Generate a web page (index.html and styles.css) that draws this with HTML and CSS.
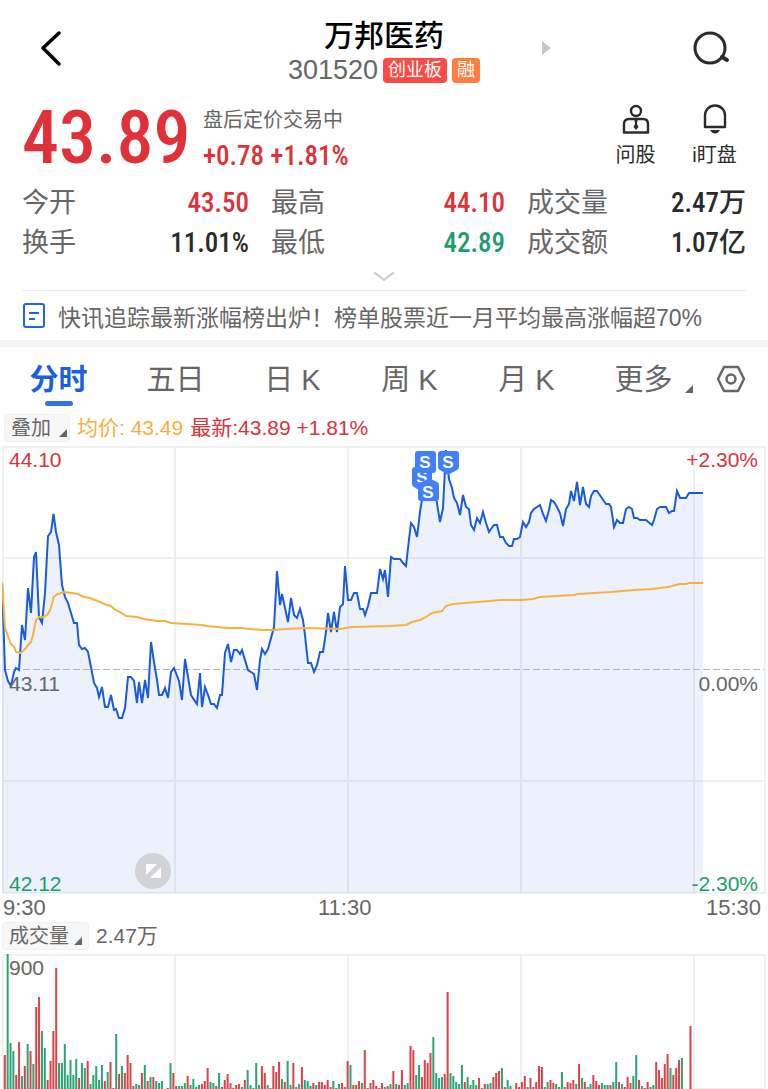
FILE: index.html
```
<!DOCTYPE html>
<html lang="zh-CN">
<head>
    <meta charset="UTF-8">
    <meta name="viewport" content="width=device-width, initial-scale=1.0">
    <title>万邦医药 301520</title>
    <link rel="stylesheet" href="styles.css">
</head>
<body>
    <header class="top-bar">
        <button class="icon-btn back" aria-label="返回">
            <svg width="24" height="38" viewBox="0 0 24 38"><path d="M21 4 5 19 21 35" fill="none" stroke="#000" stroke-width="3.500" stroke-linecap="round" stroke-linejoin="round"/></svg>
        </button>
        <div class="stock">
            <h1>万邦医药</h1>
            <div class="stock-code">
                <span>301520</span>
                <span class="tag tag-red">创业板</span>
                <span class="tag tag-orange">融</span>
            </div>
        </div>
        <button class="icon-btn next" aria-label="下一只">
            <svg width="10" height="16" viewBox="0 0 10 16"><path d="M1 1 10 8 1 15z" fill="#c8c8c8"/></svg>
        </button>
        <button class="icon-btn search" aria-label="搜索">
            <svg width="38" height="34" viewBox="0 0 38 34"><circle cx="18" cy="17" r="15" fill="none" stroke="#2b2b2b" stroke-width="3"/><path d="M30 26 35 29" stroke="#2b2b2b" stroke-width="4" stroke-linecap="round"/></svg>
        </button>
    </header>

    <section class="price-row">
        <div class="price">43.89</div>
        <div class="price-side">
            <div class="status">盘后定价交易中</div>
            <div class="change">+0.78 +1.81%</div>
        </div>
        <button class="tool">
            <svg width="28" height="30" viewBox="0 0 28 30" fill="none" stroke="#2b2b2b" stroke-width="2.400"><circle cx="14" cy="7" r="5"/><path d="M2 28.500V20Q2 15 7 15H21Q26 15 26 20V28.500z" stroke-linejoin="round"/><path d="M12.500 16h3l-.5 4 1.500 3-2.500 3-2.500-3 1.500-3z" fill="#2b2b2b" stroke="none"/></svg>
            <span>问股</span>
        </button>
        <button class="tool">
            <svg width="28" height="30" viewBox="0 0 28 30" fill="none" stroke="#2b2b2b" stroke-width="2.400"><path d="M4 23V11.500a10 10 0 0 1 20 0V23z" stroke-linejoin="round"/><path d="M9 26h10q-2 3.500-5 3.500T9 26z" fill="#2b2b2b" stroke="none"/></svg>
            <span>i盯盘</span>
        </button>
    </section>

    <dl class="quote">
        <div><dt>今开</dt><dd class="up">43.50</dd></div>
        <div><dt>最高</dt><dd class="up">44.10</dd></div>
        <div><dt>成交量</dt><dd>2.47万</dd></div>
        <div><dt>换手</dt><dd>11.01%</dd></div>
        <div><dt>最低</dt><dd class="down">42.89</dd></div>
        <div><dt>成交额</dt><dd>1.07亿</dd></div>
    </dl>
    <button class="expand" aria-label="展开">
        <svg width="22" height="12" viewBox="0 0 22 12"><path d="M2 2 11 9 20 2" fill="none" stroke="#c8c8c8" stroke-width="2" stroke-linecap="round"/></svg>
    </button>

    <a class="news" href="#">
        <svg width="24" height="26" viewBox="0 0 24 26" fill="none" stroke="#2563e0" stroke-width="2"><rect x="2" y="1" width="20" height="23" rx="2"/><path d="M7 10H17M7 16H13"/></svg>
        <span>快讯追踪最新涨幅榜出炉！榜单股票近一月平均最高涨幅超70%</span>
    </a>

    <nav class="tabs">
        <button class="tab active">分时</button>
        <button class="tab">五日</button>
        <button class="tab">日 K</button>
        <button class="tab">周 K</button>
        <button class="tab">月 K</button>
        <button class="tab more">更多</button>
        <button class="settings" aria-label="设置">
            <svg width="30" height="28" viewBox="0 0 30 28" fill="none" stroke="#666" stroke-width="2.500"><path d="M8 2H22L28 14 22 26H8L2 14z" stroke-linejoin="round"/><circle cx="15" cy="14" r="4.500"/></svg>
        </button>
    </nav>

    <div class="legend">
        <button class="pick overlay-pick">叠加</button>
        <span class="avg">均价: 43.49</span>
        <span class="up">最新:43.89 +1.81%</span>
    </div>

    <div class="chart">
        <svg id="priceChart" viewBox="2 446 764 448">
            <g class="grid">
                <path d="M3 447H765M3 558H765M3 781H765M3 893H765M3 446V894M175 446V894M348 446V894M521 446V894M694 446V894M765 446V894"/>
            </g>
            <polygon id="priceArea" class="area"/>
            <path class="base-line" d="M3 669.500H764"/>
            <polyline id="priceLine" class="price-line"/>
            <polyline id="avgLine" class="avg-line"/>
            <g class="marker">
                <path d="M415 467h14q3 0 3 3v14q0 2-2 3l-8 5-8-5q-2-1-2-3v-14q0-3 3-3z"/>
                <text x="422" y="483">S</text>
                <path d="M418 451h15q3 0 3 3v16q0 3-3 3h-15q-3 0-3-3v-16q0-3 3-3z"/>
                <text x="425" y="468">S</text>
                <path d="M422 482l7-4 8 4q2 1 2 3v13q0 3-3 3h-15q-3 0-3-3v-13q0-3 4-3z"/>
                <text x="428" y="498">S</text>
                <path d="M441 451h15q3 0 3 3v13q0 2-2 3l-9 5-8-5q-2-1-2-3v-13q0-3 3-3z"/>
                <text x="448" y="468">S</text>
            </g>
        </svg>
        <span class="label top left up">44.10</span>
        <span class="label top right up">+2.30%</span>
        <span class="label mid left">43.11</span>
        <span class="label mid right">0.00%</span>
        <span class="label bottom left down">42.12</span>
        <span class="label bottom right down">-2.30%</span>
        <button class="fullscreen" aria-label="全屏">
            <svg width="36" height="36" viewBox="0 0 36 36"><circle cx="18" cy="18" r="18" fill="#d2d3d7"/><path d="M11 11H22L11 22zM26 14V25H15z" fill="#fff"/></svg>
        </button>
    </div>
    <div class="times"><span>9:30</span><span>11:30</span><span>15:30</span></div>

    <div class="volume-head">
        <button class="pick volume-pick">成交量</button>
        <span>2.47万</span>
    </div>
    <div class="chart">
        <svg id="volumeChart" viewBox="2 953 764 136">
            <g class="grid">
                <path d="M3 954H765M3 1088H765M3 953V1088M175 953V1088M348 953V1088M521 953V1088M694 953V1088M765 953V1088"/>
            </g>
            <g id="bars"></g>
        </svg>
        <span class="label top left">900</span>
    </div>

    <script src="script.js"></script>
</body>
</html>
```
FILE: styles.css
```
* {
    box-sizing: border-box;
}
body {
    margin: 0;
    background-color: #fff;
    color: #666;
    font-family: "Liberation Sans", "Noto Sans CJK SC", sans-serif;
}
button {
    padding: 0;
    border: none;
    background: none;
    color: inherit;
    font: inherit;
    cursor: pointer;
}
svg {
    display: block;
}
.up {
    color: #d9333b;
}
.down {
    color: #1d9d6b;
}

/* header */
.top-bar {
    position: relative;
    display: grid;
    grid-template-columns: 1fr auto 1fr;
    align-items: center;
    height: 96px;
    padding: 0 38px;
}
.stock {
    padding-top: 8px;
    text-align: center;
}
h1 {
    margin: 0;
    color: #000;
    font-size: 30px;
    font-weight: 500;
    line-height: 36px;
}
.stock-code {
    display: flex;
    align-items: center;
    gap: 5px;
    font-size: 27px;
    line-height: 32px;
}
.tag {
    padding: 0 5px;
    border-radius: 4px;
    color: #fff;
    font-size: 18px;
    line-height: 25px;
}
.tag-red {
    background-color: #fb4b46;
}
.tag-orange {
    background-color: #ff7d40;
}
.next {
    position: absolute;
    left: calc(50% + 157px);
    top: 40px;
}
.search {
    justify-self: end;
}

/* price */
.price-row {
    display: flex;
    align-items: center;
    height: 87px;
    padding: 0 14px 3px 22px;
}
.price {
    width: 181px;
    color: #e03038;
    font-family: "Roboto Condensed", Roboto, sans-serif;
    font-size: 74px;
    font-weight: 500;
    line-height: 80px;
}
.price-side {
    flex: 1;
}
.status {
    font-size: 20px;
    line-height: 36px;
}
.change {
    color: #e03038;
    font-family: "Roboto Condensed", Roboto, sans-serif;
    font-size: 27px;
    font-weight: 500;
    line-height: 36px;
}
.tool {
    display: flex;
    flex-direction: column;
    align-items: center;
    gap: 6px;
    width: 79px;
    padding-bottom: 2px;
    color: #2b2b2b;
    font-size: 20px;
    line-height: 30px;
}

/* quote values */
.quote {
    display: grid;
    grid-template-columns: 227fr 234fr 219fr;
    column-gap: 22px;
    margin: 0;
    padding: 0 22px;
}
.quote div {
    display: flex;
    justify-content: space-between;
    height: 40px;
    line-height: 40px;
}
.quote dt {
    font-size: 27px;
}
.quote dd {
    margin: 0;
    color: #2b2b2b;
    font-family: "Roboto Condensed", Roboto, "Noto Sans CJK SC", sans-serif;
    font-size: 27px;
    font-weight: 500;
}
.quote .up {
    color: #e03038;
}
.quote .down {
    color: #1d9d6b;
}
.expand {
    display: flex;
    justify-content: center;
    align-items: center;
    width: 100%;
    height: 27px;
}
.news {
    display: flex;
    align-items: center;
    gap: 12px;
    height: 50px;
    margin: 0 22px;
    border-top: 1px solid #ebebeb;
    color: #666;
    font-size: 23px;
    text-decoration: none;
    white-space: nowrap;
}

/* tabs */
.tabs {
    display: flex;
    height: 73px;
    border-top: 7px solid #f3f3f3;
}
.tab {
    position: relative;
    flex: 1;
    font-size: 29px;
    line-height: 64px;
}
.active {
    color: #1a5fe0;
    font-weight: bold;
}
.active::after {
    content: "";
    position: absolute;
    left: 50%;
    bottom: 7px;
    width: 28px;
    height: 5px;
    margin-left: -14px;
    border-radius: 3px;
    background-color: #3570e8;
}
.more::after, .pick::after {
    content: "";
    border-left: 8px solid transparent;
    border-bottom: 8px solid #666;
}
.more::after {
    position: absolute;
    right: 9px;
    bottom: 20px;
}
.settings {
    display: flex;
    justify-content: center;
    align-items: center;
    width: 66px;
    padding-right: 9px;
    padding-bottom: 2px;
}

/* charts */
.legend, .volume-head {
    display: flex;
    gap: 7px;
    font-size: 21px;
    line-height: 28px;
}
.legend {
    height: 33px;
    padding: 1px 4px 0;
}
.volume-head {
    height: 32px;
    padding: 0 2px;
}
.pick {
    display: flex;
    justify-content: space-between;
    align-items: center;
    width: 66px;
    height: 28px;
    padding: 0 2px 0 6px;
    border: 1px solid #f0f0f0;
    border-radius: 4px;
    background-color: #f7f7f7;
    font-size: 20px;
}
.volume-pick {
    width: 87px;
    padding-right: 6px;
}
.pick::after {
    margin-top: 10px;
}
.avg {
    color: #f5b041;
}
.chart {
    position: relative;
    padding: 0 2px;
}
.label {
    position: absolute;
    font-size: 21px;
    line-height: 24px;
}
.left {
    left: 9px;
}
.right {
    right: 10px;
}
.top {
    top: 2px;
}
.mid {
    top: 226px;
}
.bottom {
    bottom: -2px;
}
.fullscreen {
    position: absolute;
    left: 135px;
    bottom: 5px;
}
.times {
    display: grid;
    grid-template-columns: 315fr 100fr 343fr;
    padding: 0 7px 0 3px;
    font-size: 22px;
    line-height: 28px;
}
.times span:last-child {
    text-align: right;
}
.grid path {
    fill: none;
    stroke: #f0f0f2;
    stroke-width: 2;
}
.area {
    fill: #2b63dc;
    fill-opacity: 0.09;
}
.base-line {
    fill: none;
    stroke: #b3b5bd;
    stroke-width: 1;
    stroke-dasharray: 7 3;
}
.price-line {
    fill: none;
    stroke: #1c5bd8;
    stroke-width: 2;
}
.avg-line {
    fill: none;
    stroke: #f7b140;
    stroke-width: 2;
}
.marker path {
    fill: #4080fb;
}
.marker text {
    fill: #fff;
    font-size: 17px;
    font-weight: bold;
    text-anchor: middle;
}
.bar-r {
    fill: #d94349;
}
.bar-g {
    fill: #2ba375;
}
```
FILE: script.js
```
const price = `2,582 5,670 8,681 11,686 14,672 16,668 19,670 22,625 25,640 28,588 31,613 34,557 36,552 39,617 42,623
45,593 48,536 51,532 53.5,514 56,532 59,545 62,585 65,597 68,603 74,623 77,623 79,645 82,649 85,648 88,652 91,667
94,683 97,688 99,697 102,687 105,707 108,707 111,695 114,710 116,709 119,718 122,718 125,708 128,677 131,677
134,681 137,703 139,682 142,703 145,680 148,698 151,642 154,662 157,680 159,695 162,695 165,688 168,698 171,672
174,668 179,681 182,700 185,659 191,695 197,704 200,673 202,707 205,687 208,695 211,704 214,704 217,708 220,695
222,695 225,653 228,644 231,662 234,650 237,650 240,654 242,650 248,670 254,674 257,690 260,660 262,649 265,654
268,649 274,627 277,571 280,605 282,594 288,622 291,598 294,615 297,618 300,609 303,620 305,635 308,663 311,663
314,672 317,665 320,652 323,652 326,632 328,613 331,632 334,612 337,632 340,607 343,604 345,566 348,600 351,600
354,593 357,593 360,609 363,609 365,615 368,606 371,593 377,593 380,569 383,579 385,570 388,597 391,557 394,559
400,559 403,563 406,566 408,548 411,523 414,527 417,537 420,512 423,493 436,497 440,522 443,508 446,450 449,479
452,488 454,498 457,503 460,515 463,495 466,507 469,509 471,525 474,530 477,518 480,523 483,512 486,523 489,532
491,529 494,525 497,525 500,537 503,537 506,543 509,546 512,546 514,539 517,539 520,537 523,522 526,527 529,522
531,513 534,509 540,505 543,514 546,521 549,510 551,500 554,502 557,507 560,513 563,526 566,509 569,504 571,491
574,501 577,482 580,505 583,487 586,504 589,507 591,496 594,491 597,491 606,504 609,504 611,507 614,527 617,520
620,523 623,523 626,509 629,507 632,509 634,518 637,518 640,520 646,520 652,525 654,520 657,509 660,507 666,507
669,513 672,511 674,511 677,491 680,498 686,498 689,493 703,493`;

const average = `2,582 5,628 8,636 11,644 14,647 16,652 20,653 23,651 26,648 28,645 31,642 33,635 36,620 39,617 44,617
48,614 51,608 53.5,597 58,594 64,592 72,593 78,594 84,597 90,598 100,602 107,605 111,606 114,609 120,612 126,616
137,617 144,619 156,621 165,621 171,623 187,624 202,625 207,626 227,628 242,628 250,629 262,630 274,630 285,629
305,628 340,629 352,627 390,626 406,625 412,622 420,620 426,617 432,613 442,611 446,606 453,604 465,603 490,601
500,600 521,600 533,599 540,597 574,595 578,594 611,592 634,590 652,589 668,587 680,584 686,584 689,583 703,583`;

// one entry per minute: r = up, g = down, then the bar height
const volume = `r34 g135 g46 g38 r14 r47 g13 r23 g45 r38 g25 r82 r92 g58 g41 r9 r28 r58 r121 g26 g26 g45 g14 g29 g14
g30 r11 g26 g21 r28 g5 g14 g23 g9 g24 r8 g17 r27 r1 g55 r15 g23 r16 r34 r26 r3 g5 g4 r16 g24 r8 g12 r12 g8 g6 g8
g0 r1 g26 r16 r3 g3 g3 g6 r13 g4 g10 g2 g4 r5 r8 r21 g7 g6 r3 g16 r2 r9 r15 r6 r1 r4 r5 g2 r9 g19 g4 g1 g26
g4 r23 r16 g4 r1 r23 r17 r27 g10 r7 g28 g4 r26 g2 g5 r22 g9 g8 g3 r6 g4 r7 r7 r4 r9 r2 g8 g1 g5 r6 r2 r28 g24
r4 r4 r8 g6 r39 g1 r6 r9 r3 r1 r6 g2 r3 g5 r18 g5 r4 r19 g4 g6 r43 r39 g14 g24 r12 r29 r26 r36 g52 g16 g11 g12
r15 r97 g16 g13 g7 g5 g24 r7 g12 g4 g9 g4 r11 g1 r5 g5 g6 r12 r16 r18 g21 r2 g9 g3 g0 r6 r2 r7 r13 g2 r11 r2 r7
r23 r22 g2 g7 r9 r6 g5 g2 g17 g2 r7 r6 r9 g5 r25 g11 r7 g2 g5 r14 r8 r4 g6 g4 g4 r4 g7 g27 r7 g5 r2 r12 r6 g13
g34 r9 g3 r1 r7 g2 g4 r27 r19 r11 r25 r35 g21 r14 r21 r29 g31 g0 g0 r63`;

document.getElementById('priceLine').setAttribute('points', price);
document.getElementById('avgLine').setAttribute('points', average);
document.getElementById('priceArea').setAttribute('points', `${price} 703,893 2,893`);

const bars = document.getElementById('bars');
volume.split(/\s+/).forEach((item, i) => {
    const height = Number(item.slice(1));
    const bar = document.createElementNS('http://www.w3.org/2000/svg', 'rect');
    bar.setAttribute('class', `bar-${item[0]}`);
    bar.setAttribute('x', 3.8 + i * 2.857);
    bar.setAttribute('y', 1088 - height);
    bar.setAttribute('width', 2);
    bar.setAttribute('height', height);
    bars.appendChild(bar);
});
```
